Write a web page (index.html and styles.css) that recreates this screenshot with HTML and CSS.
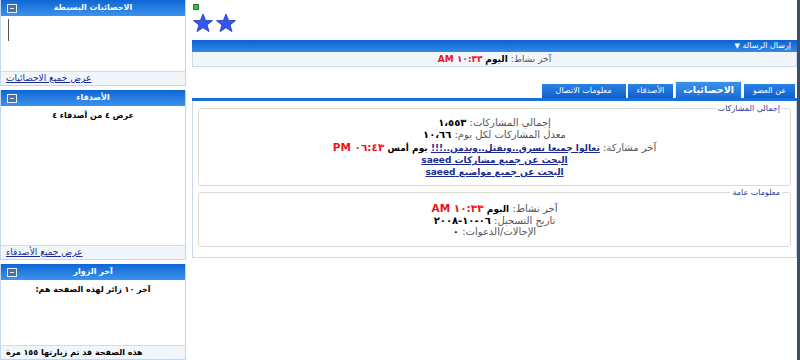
FILE: index.html
```html
<!DOCTYPE html>
<html lang="ar" dir="rtl">
<head>
    <meta charset="UTF-8">
    <title>الملف الشخصي</title>
    <link rel="stylesheet" href="styles.css">
</head>
<body>
    <div class="page">
        <div class="main">
            <div class="status-dot"></div>
            <div class="stars">
                <svg width="20" height="20" viewBox="0 0 20 20"><polygon points="10,1 12.6,7.4 19.5,7.6 14.1,11.9 16,18.6 10,14.7 4,18.6 5.9,11.9 0.5,7.6 7.4,7.4" fill="#3557ea" stroke="#1d36b8" stroke-width="0.8"/></svg>
                <svg width="20" height="20" viewBox="0 0 20 20"><polygon points="10,1 12.6,7.4 19.5,7.6 14.1,11.9 16,18.6 10,14.7 4,18.6 5.9,11.9 0.5,7.6 7.4,7.4" fill="#3557ea" stroke="#1d36b8" stroke-width="0.8"/></svg>
            </div>

            <div class="bar">إرسال الرسالة <span class="arrow">&#9660;</span></div>
            <div class="info-row">
                <span class="label">آخر نشاط:</span> <b>اليوم</b> <span class="time">١٠:٣٣ AM</span>
            </div>

            <div class="tabs">
                <div class="tab">عن العضو</div>
                <div class="tab active">الاحصائيات</div>
                <div class="tab">الأصدقاء</div>
                <div class="tab wide">معلومات الاتصال</div>
            </div>
            <div class="tab-line"></div>

            <div class="tab-body">
                <fieldset class="group">
                    <legend>إجمالي المشاركات</legend>
                    <div class="lines">
                        <div><span class="label">إجمالي المشاركات:</span> <b>١،٥٥٣</b></div>
                        <div><span class="label">معدل المشاركات لكل يوم:</span> <b>١٠،٦٦</b></div>
                        <div><span class="label">آخر مشاركة:</span> <a href="#">تعالوا جميعا نسرق..ونقتل..وندمن..!!!</a> <b class="small">يوم أمس</b> <span class="time big">٠٦:٤٣ PM</span></div>
                        <div><a href="#">البحث عن جميع مشاركات saeed</a></div>
                        <div><a href="#">البحث عن جميع مواضيع saeed</a></div>
                    </div>
                </fieldset>

                <fieldset class="group second">
                    <legend>معلومات عامة</legend>
                    <div class="lines">
                        <div><span class="label">آخر نشاط:</span> <b class="small">اليوم</b> <span class="time big">١٠:٣٣ AM</span></div>
                        <div><span class="label">تاريخ التسجيل:</span> <b class="ltr">٢٠٠٨-١٠-٠٦</b></div>
                        <div><span class="label">الإحالات/الدعوات:</span> <b>٠</b></div>
                    </div>
                </fieldset>
            </div>
        </div>

        <div class="side">
            <div class="block">
                <div class="block-head"><span class="toggle"></span>الاحصائيات البسيطة</div>
                <div class="block-body stats-body"><span class="cursor"></span></div>
                <div class="block-foot"><a href="#">عرض جميع الاحصائيات</a></div>
            </div>
            <div class="block">
                <div class="block-head"><span class="toggle"></span>الأصدقاء</div>
                <div class="block-body friends-body"><b>عرض ٤ من أصدقاء ٤</b></div>
                <div class="block-foot"><a href="#">عرض جميع الأصدقاء</a></div>
            </div>
            <div class="block">
                <div class="block-head"><span class="toggle"></span>آخر الزوار</div>
                <div class="block-body visitors-body"><b>آخر ١٠ زائر لهذه الصفحة هم:</b></div>
                <div class="block-foot"><b>هذه الصفحة قد تم زيارتها ١٥٥ مرة</b></div>
            </div>
        </div>
    </div>
</body>
</html>
```

FILE: styles.css
```css
body {
    margin: 0;
    font-family: Tahoma, "DejaVu Sans", sans-serif;
    font-size: 9px;
    color: #000;
    background: #fff;
}
.page {
    display: flex;
    height: 360px;
    border-right: 3px solid #3b4d6b;
    box-sizing: border-box;
}
a {
    color: #1b2a8f;
    text-decoration: underline;
}

/* main column */
.main {
    flex: 1;
    padding-top: 4px;
    margin-left: 6px;
}
.status-dot {
    width: 4px;
    height: 4px;
    margin: 0 auto 0 1px;
    background: #3fbf3f;
    border: 1px solid #2a7a2a;
}
.stars {
    display: flex;
    justify-content: flex-end;
    gap: 3px;
    margin: 3px 0 0 1px;
    height: 21px;
}
.bar {
    margin-top: 6px;
    height: 12px;
    line-height: 12px;
    padding-right: 6px;
    color: #fff;
    font-size: 8px;
    background: linear-gradient(#0d62cf, #2f8ae8);
}
.arrow {
    font-size: 7px;
}
.info-row {
    height: 14px;
    line-height: 14px;
    text-align: center;
    background: #f1f6fb;
    border: 1px solid #cfdcea;
    border-top: none;
}
.label {
    color: #555;
}
.time {
    color: #e8151b;
    font-weight: bold;
}
.time.big {
    font-size: 10.5px;
}
.small {
    font-size: 9px;
}
.ltr {
    direction: ltr;
    unicode-bidi: bidi-override;
}

.tabs {
    display: flex;
    align-items: flex-end;
    gap: 2px;
    margin-top: 14px;
    padding-right: 2px;
    height: 17px;
}
.tab {
    height: 14px;
    line-height: 14px;
    padding: 0 9px;
    color: #fff;
    font-size: 8px;
    background: linear-gradient(#2a83e6, #0e61cd);
}
.tab.wide {
    padding: 0 14px;
}
.tab.active {
    height: 16px;
    line-height: 16px;
    padding: 0 7px;
    font-size: 9.5px;
    font-weight: bold;
    background: linear-gradient(#3a92ee, #1b6ed8);
    border: 1px solid #e3eef9;
    border-bottom: none;
}
.tab-line {
    height: 3px;
    background: #1a6fd6;
}
.tab-body {
    border: 1px solid #cad8ea;
    border-top: none;
    height: 153px;
    padding: 3px 5px 0;
}
.group {
    margin: 0 0 2px;
    padding: 4px 0 7px;
    border: 1px solid #dcdcd2;
    border-radius: 3px;
}
.group.second {
    padding-top: 6px;
    padding-bottom: 9px;
}
.group legend {
    color: #2b3a9e;
    font-size: 8px;
    padding: 0 2px;
    margin-right: 8px;
}
.lines {
    text-align: center;
    font-size: 10px;
}
.lines div {
    line-height: 12px;
}
.second .lines div {
    line-height: 11px;
}
.lines a {
    font-weight: bold;
    font-size: 9px;
}

/* sidebar */
.side {
    width: 186px;
    display: flex;
    flex-direction: column;
    gap: 4px;
}
.block {
    border: 1px solid #c3d6ec;
    border-top: none;
}
.block-head {
    position: relative;
    height: 16px;
    line-height: 16px;
    text-align: center;
    color: #fff;
    font-size: 8px;
    font-weight: bold;
    background: linear-gradient(#0f66d3, #3b93ee);
}
.toggle {
    position: absolute;
    left: 6px;
    top: 4px;
    width: 8px;
    height: 7px;
    border: 1px solid #e6eef8;
    background: #4e6f9f;
}
.toggle::after {
    content: "";
    position: absolute;
    left: 2px;
    top: 3px;
    width: 4px;
    height: 1px;
    background: #dfe9f5;
}
.block-body {
    background: #fff;
    text-align: center;
    font-size: 8px;
}
.stats-body {
    height: 55px;
    text-align: left;
}
.cursor {
    display: inline-block;
    width: 1px;
    height: 22px;
    margin: 3px 0 0 7px;
    background: #555;
}
.friends-body {
    height: 139px;
    padding-top: 5px;
    box-sizing: border-box;
}
.visitors-body {
    height: 65px;
    padding-top: 5px;
    box-sizing: border-box;
}
.block-foot {
    height: 13px;
    line-height: 13px;
    padding-left: 5px;
    text-align: left;
    background: #f1f6fb;
    border-top: 1px solid #cfdcea;
}
.block-foot b {
    font-size: 8px;
}
```
